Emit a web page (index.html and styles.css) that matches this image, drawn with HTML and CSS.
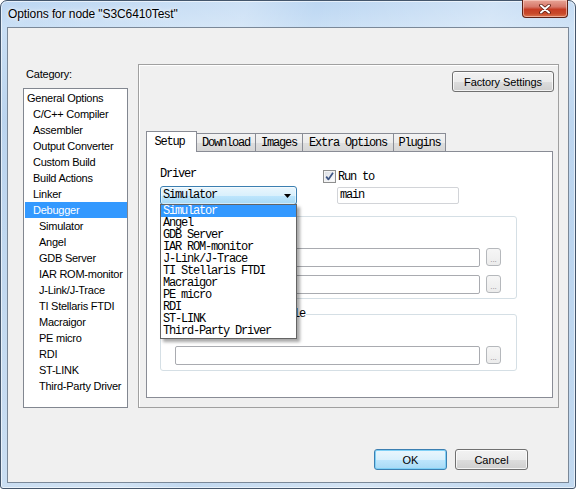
FILE: index.html
```html
<!DOCTYPE html>
<html>
<head>
<meta charset="utf-8">
<title>Options for node "S3C6410Test"</title>
<link rel="stylesheet" href="styles.css">
</head>
<body>
<div class="window">
  <div class="titlebar">
    <span class="title">Options for node "S3C6410Test"</span>
    <button class="close" aria-label="Close">
      <svg width="12" height="10" viewBox="0 0 12 10">
        <path d="M2 1.5 L10 8.5 M10 1.5 L2 8.5" stroke="#5a1c10" stroke-width="3.6" stroke-linecap="round" fill="none"/>
        <path d="M2 1.5 L10 8.5 M10 1.5 L2 8.5" stroke="#ffffff" stroke-width="2" stroke-linecap="round" fill="none"/>
      </svg>
    </button>
  </div>
  <div class="client">
    <div class="main">
      <div class="catcol">
        <div class="catlabel">Category:</div>
        <ul class="catlist">
          <li class="l1">General Options</li>
          <li class="l2">C/C++ Compiler</li>
          <li class="l2">Assembler</li>
          <li class="l2">Output Converter</li>
          <li class="l2">Custom Build</li>
          <li class="l2">Build Actions</li>
          <li class="l2">Linker</li>
          <li class="l2 selected">Debugger</li>
          <li class="l3">Simulator</li>
          <li class="l3">Angel</li>
          <li class="l3">GDB Server</li>
          <li class="l3">IAR ROM-monitor</li>
          <li class="l3">J-Link/J-Trace</li>
          <li class="l3">TI Stellaris FTDI</li>
          <li class="l3">Macraigor</li>
          <li class="l3">PE micro</li>
          <li class="l3">RDI</li>
          <li class="l3">ST-LINK</li>
          <li class="l3">Third-Party Driver</li>
        </ul>
      </div>
      <div class="page">
        <div class="factory-row">
          <button class="btn factory">Factory Settings</button>
        </div>
        <div class="tabs">
          <div class="tab tab-sel mono">Setup</div>
          <div class="tab tab-download mono">Download</div>
          <div class="tab tab-images mono">Images</div>
          <div class="tab tab-extra mono">Extra Options</div>
          <div class="tab tab-plugins mono">Plugins</div>
        </div>
        <div class="pane mono">
          <div class="row1">
            <div class="drivercol">
              <div class="lbl">Driver</div>
              <div class="combo">
                <span class="combo-text">Simulator</span>
                <svg class="combo-arrow" width="7" height="4" viewBox="0 0 7 4"><path d="M0 0 H7 L3.5 4 Z" fill="#000"/></svg>
              </div>
              <ul class="dropdown">
                <li class="hl">Simulator</li>
                <li>Angel</li>
                <li>GDB Server</li>
                <li>IAR ROM-monitor</li>
                <li>J-Link/J-Trace</li>
                <li>TI Stellaris FTDI</li>
                <li>Macraigor</li>
                <li>PE micro</li>
                <li>RDI</li>
                <li>ST-LINK</li>
                <li>Third-Party Driver</li>
              </ul>
            </div>
            <div class="runcol">
              <div class="chk">
                <span class="box">
                  <svg width="11" height="11" viewBox="0 0 11 11"><path d="M2.2 5.6 L4.4 8.4 L9 1.8" stroke="#3d5584" stroke-width="1.7" fill="none" stroke-linejoin="round"/></svg>
                </span>
                <span>Run to</span>
              </div>
              <div class="edit edit-main">main</div>
            </div>
          </div>
          <fieldset class="group g1">
            <legend class="legend-blank"></legend>
            <div class="chk chk-group"><span class="box"></span></div>
            <div class="filerow first"><div class="edit path"></div><button class="browse">...</button></div>
            <div class="filerow second"><div class="edit path"></div><button class="browse">...</button></div>
          </fieldset>
          <fieldset class="group g2">
            <legend>Device description file</legend>
            <div class="chk chk-group"><span class="box"></span></div>
            <div class="filerow first"><div class="edit path"></div><button class="browse">...</button></div>
          </fieldset>
        </div>
      </div>
    </div>
    <div class="footer">
      <button class="btn ok">OK</button>
      <button class="btn cancel">Cancel</button>
    </div>
  </div>
</div>
</body>
</html>
```
FILE: styles.css
```css
* { box-sizing: border-box; }
html, body { margin: 0; padding: 0; }
body {
  width: 576px;
  height: 491px;
  overflow: hidden;
  background: #ffffff;
  font-family: "Liberation Sans", Arial, sans-serif;
  color: #000;
}
.window {
  width: 576px;
  height: 489px;
  border: 1px solid #44566c;
  border-radius: 7px 7px 3px 3px;
  background:
    linear-gradient(105deg, rgba(255,255,255,0) 0%, rgba(255,255,255,0.25) 35%, rgba(255,255,255,0) 45%, rgba(255,255,255,0.3) 70%, rgba(255,255,255,0) 90%),
    linear-gradient(180deg, #bcd6f2 0px, #c9dff5 26px, #b9d3ee 120px, #c2d9f0 100%);
  box-shadow: inset 0 0 0 1px rgba(255,255,255,0.6);
  display: flex;
  flex-direction: column;
  padding: 0 6px 5px 6px;
}
.titlebar {
  height: 26px;
  display: flex;
  align-items: flex-start;
}
.title {
  font-size: 12px;
  line-height: 24px;
  margin-top: 1px;
  padding-left: 1px;
  letter-spacing: -0.1px;
  text-shadow: 0 0 6px rgba(255,255,255,0.9), 0 0 3px rgba(255,255,255,0.9);
}
.close {
  margin-left: auto;
  margin-right: 1px;
  margin-top: -1px;
  width: 46px;
  height: 18px;
  padding: 0;
  border: 1px solid #5e2216;
  border-top: none;
  border-radius: 0 0 4px 4px;
  background: linear-gradient(180deg, #e8a496 0%, #d7796a 40%, #c63d24 55%, #c84a2a 80%, #dc7550 100%);
  box-shadow: inset 0 0 0 1px rgba(255,220,210,0.55);
  display: flex;
  align-items: center;
  justify-content: center;
}
.close svg { display: block; }

.client {
  height: 456px;
  border: 1px solid #7a8898;
  background: #f0f0f0;
  display: flex;
  flex-direction: column;
  padding: 36px 9px 0 15px;
}
.main {
  display: flex;
  gap: 10px;
}
.catcol {
  width: 105px;
  padding-top: 3px;
}
.catlabel {
  font-size: 11px;
  line-height: 14px;
  height: 14px;
  padding-left: 3px;
  margin-bottom: 7px;
  letter-spacing: -0.2px;
}
.catlist {
  list-style: none;
  margin: 0;
  height: 320px;
  border: 1px solid #828790;
  background: #fff;
  padding: 1px 0 0 1px;
  overflow: hidden;
}
.catlist li {
  height: 16px;
  line-height: 16px;
  font-size: 11px;
  letter-spacing: -0.25px;
  white-space: nowrap;
}
.catlist .l1 { padding-left: 2px; }
.catlist .l2 { padding-left: 8px; }
.catlist .l3 { padding-left: 14px; }
.catlist .selected { background: #3399ff; color: #fff; }

.page {
  flex: 1;
  border: 1px solid #a0a0a0;
  box-shadow: inset 1px 1px 0 #ffffff;
  display: flex;
  flex-direction: column;
  padding: 6px 0 9px 7px;
}
.factory-row {
  display: flex;
  justify-content: flex-end;
  padding-right: 4px;
}
.btn {
  font-family: "Liberation Sans", Arial, sans-serif;
  font-size: 11px;
  color: #000;
  height: 21px;
  padding: 0;
  border: 1px solid #707070;
  border-radius: 3px;
  background: linear-gradient(180deg, #f2f2f2 0%, #ebebeb 50%, #dddddd 51%, #cfcfcf 100%);
  box-shadow: inset 0 0 0 1px rgba(255,255,255,0.75);
}
.factory { width: 102px; letter-spacing: -0.1px; }

.mono {
  font-family: "Liberation Mono", "Courier New", monospace;
  font-size: 12px;
  letter-spacing: -1.2px;
}
.tabs {
  margin-top: 39px;
  height: 20px;
  display: flex;
  align-items: flex-end;
  position: relative;
  z-index: 2;
}
.tab {
  height: 18px;
  line-height: 14px;
  padding-top: 2px;
  text-align: center;
  border: 1px solid #898c95;
  border-bottom: none;
  background: linear-gradient(180deg, #f3f3f3 0%, #ebebeb 50%, #dedede 51%, #d6d6d6 100%);
  margin-left: -1px;
  white-space: nowrap;
}
.tab-sel {
  margin-left: 0;
  width: 51px;
  height: 21px;
  padding-top: 3px;
  padding-right: 4px;
  margin-bottom: -1px;
  background: #fff;
  position: relative;
  z-index: 3;
}
.tab-download { width: 60px; }
.tab-images { width: 48px; }
.tab-extra { width: 92px; }
.tab-plugins { width: 53px; }

.pane {
  flex: 1;
  margin-right: 5px;
  border: 1px solid #898c95;
  background: #fff;
  padding: 16px 0 0 13px;
}
.row1 {
  display: flex;
  align-items: flex-start;
}
.drivercol {
  width: 137px;
  position: relative;
  z-index: 5;
}
.lbl {
  height: 12px;
  line-height: 12px;
  margin-bottom: 6px;
}
.combo {
  height: 19px;
  border: 1px solid #3c7fb1;
  border-radius: 3px;
  background: linear-gradient(180deg, #eaf6fd 0%, #d9f0fc 50%, #bee6fd 51%, #a7d9f5 100%);
  box-shadow: inset 0 0 0 1px rgba(255,255,255,0.5);
  display: flex;
  align-items: center;
  padding: 0 5px 0 2px;
}
.combo-text { line-height: 17px; }
.combo-arrow { margin-left: auto; display: block; }
.dropdown {
  position: absolute;
  left: 0;
  top: 36px;
  width: 137px;
  height: 135px;
  margin: 0;
  padding: 0;
  list-style: none;
  border: 1px solid #646464;
  background: #fff;
  box-shadow: 3px 3px 3px rgba(0,0,0,0.35);
}
.dropdown li {
  height: 12px;
  line-height: 12px;
  padding-left: 2px;
  white-space: nowrap;
}
.dropdown .hl { background: #3399ff; color: #fff; }

.runcol {
  margin-left: 26px;
  padding-top: 2px;
}
.chk {
  display: flex;
  align-items: center;
  height: 13px;
  gap: 2px;
  white-space: nowrap;
}
.box {
  width: 13px;
  height: 13px;
  border: 1px solid #8e8f8f;
  background: linear-gradient(135deg, #d9dde3 0%, #f4f5f7 70%, #ffffff 100%);
  box-shadow: inset 0 0 0 1px #f4f4f4;
  display: flex;
  align-items: center;
  justify-content: center;
  flex: none;
}
.box svg { display: block; }
.edit {
  background: #fff;
  border: 1px solid #abadb3;
  border-radius: 2px;
}
.edit-main {
  margin-top: 4px;
  margin-left: 14px;
  width: 122px;
  height: 17px;
  line-height: 15px;
  padding-left: 2px;
  border-color: #d2d4d8;
}
.group {
  width: 357px;
  margin: 0;
  border: 1px solid #d5dfe5;
  border-radius: 3px;
  padding: 0 15px 0 14px;
}
.group legend {
  padding: 0 1px;
  margin-left: -9px;
  line-height: 12px;
  height: 12px;
}
.group .legend-blank { width: 74px; }
.g1 { margin-top: 5px; padding-bottom: 4px; }
.g2 { margin-top: 9px; padding-bottom: 5px; }
.chk-group {
  margin-top: 6px;
  margin-left: -11px;
}
.filerow {
  display: flex;
  align-items: flex-start;
  gap: 6px;
}
.filerow.first { margin-top: 7px; }
.filerow.second { margin-top: 8px; }
.path {
  width: 305px;
  height: 19px;
  border-color: #a9abb0;
}
.browse {
  width: 15px;
  height: 18px;
  padding: 5px 0 0 0;
  border: 1px solid #b5b8bc;
  border-radius: 3px;
  background: linear-gradient(180deg, #f6f6f6, #ececec);
  color: #8a8a8a;
  font-family: "Liberation Sans", Arial, sans-serif;
  font-size: 8px;
  line-height: 8px;
  letter-spacing: 0;
}

.footer {
  margin-top: 41px;
  display: flex;
  justify-content: flex-end;
  gap: 8px;
  padding-right: 31px;
}
.ok, .cancel { width: 73px; }
.ok {
  border-color: #3c7fb1;
  background: linear-gradient(180deg, #eaf6fd 0%, #d9f0fc 50%, #bee6fd 51%, #a7d9f5 100%);
  box-shadow: inset 0 0 0 1px #7fd0f6;
}
```
